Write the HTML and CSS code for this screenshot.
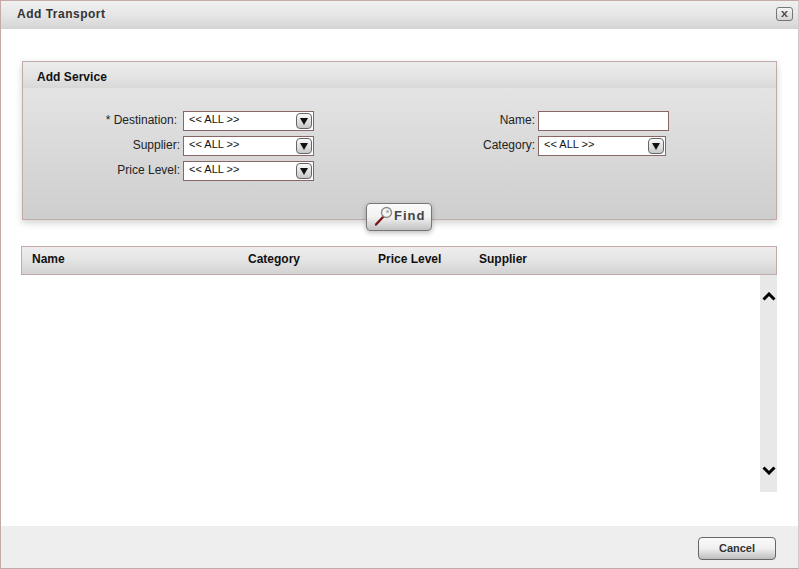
FILE: index.html
```html
<!DOCTYPE html>
<html lang="en">
<head>
<meta charset="utf-8">
<title>Add Transport</title>
<link rel="stylesheet" href="styles.css">
</head>
<body>
<div class="dialog">
  <header class="titlebar">
    <h1 class="title">Add Transport</h1>
    <button class="close" type="button" aria-label="Close">
      <svg width="9" height="8" viewBox="0 0 9 8"><path d="M1 1h2l1.500 2L6 1h2L5.600 4 8 7H6L4.500 5 3 7H1l2.400-3z" fill="#555"/></svg>
    </button>
  </header>
  <main class="content">
    <section class="panel">
      <h2 class="panel-head">Add Service</h2>
      <div class="form">
        <div class="form-col">
          <div class="row"><label class="label label-dest">* Destination:</label><div class="select"><span>&lt;&lt; ALL &gt;&gt;</span><i class="arrow"><svg width="8" height="7" viewBox="0 0 8 7"><path d="M0 0h8L4 7z" fill="#111"/></svg></i></div></div>
          <div class="row"><label class="label">Supplier:</label><div class="select"><span>&lt;&lt; ALL &gt;&gt;</span><i class="arrow"><svg width="8" height="7" viewBox="0 0 8 7"><path d="M0 0h8L4 7z" fill="#111"/></svg></i></div></div>
          <div class="row"><label class="label">Price Level:</label><div class="select"><span>&lt;&lt; ALL &gt;&gt;</span><i class="arrow"><svg width="8" height="7" viewBox="0 0 8 7"><path d="M0 0h8L4 7z" fill="#111"/></svg></i></div></div>
        </div>
        <div class="form-col form-col-right">
          <div class="row"><label class="label">Name:</label><div class="input"></div></div>
          <div class="row"><label class="label">Category:</label><div class="select select-short"><span>&lt;&lt; ALL &gt;&gt;</span><i class="arrow"><svg width="8" height="7" viewBox="0 0 8 7"><path d="M0 0h8L4 7z" fill="#111"/></svg></i></div></div>
        </div>
      </div>
      <button class="find" type="button">
        <svg class="find-icon" width="19" height="20" viewBox="0 0 19 20">
          <path d="M8.500 10.500 1 18.500" stroke="#7c1414" stroke-width="2.400" stroke-linecap="round"/>
          <circle cx="11.500" cy="6.500" r="5" fill="#f4f4f4" stroke="#8d8d8d" stroke-width="1.400"/>
          <circle cx="12.500" cy="5.500" r="1.600" fill="#b5b5b5"/>
        </svg>
        <span class="find-text">Find</span>
      </button>
    </section>
    <div class="thead">
      <span class="th th-name">Name</span>
      <span class="th th-cat">Category</span>
      <span class="th th-price">Price Level</span>
      <span class="th">Supplier</span>
    </div>
    <div class="tbody">
      <div class="scrollbar">
        <svg width="14" height="9" viewBox="0 0 14 9"><path d="M1.500 7.500 7 2l5.500 5.500" fill="none" stroke="#000" stroke-width="3"/></svg>
        <svg width="14" height="9" viewBox="0 0 14 9"><path d="M1.500 1.500 7 7l5.500-5.500" fill="none" stroke="#000" stroke-width="3"/></svg>
      </div>
    </div>
  </main>
  <footer class="footer">
    <button class="cancel" type="button">Cancel</button>
  </footer>
</div>
</body>
</html>
```
FILE: styles.css
```css
* { box-sizing: border-box; }
html, body { margin: 0; padding: 0; background: #fff; }
body { width: 799px; height: 569px; overflow: hidden; font-family: "Liberation Sans", Arial, sans-serif; font-size: 12px; color: #111; }
.dialog { width: 799px; height: 569px; display: flex; flex-direction: column; border: 1px solid #c4a9a9; border-right-color: #d8c8c8; background: #fff; }
.titlebar { height: 28px; flex: none; display: flex; align-items: center; justify-content: space-between; padding: 0 5px 2px 16px; background: linear-gradient(#f0f0f0, #e6e6e6 50%, #d4d4d4); }
.title { margin: 0; font-size: 12px; font-weight: bold; letter-spacing: 0.5px; color: #333; }
.close { width: 17px; height: 14px; padding: 0; display: flex; align-items: center; justify-content: center; border: 1px solid #777; border-radius: 3px; background: linear-gradient(#f4f4f4, #d4d4d4); }
.content { flex: 1; min-height: 0; padding: 32px 21px 0 20px; }
.panel { position: relative; height: 159px; margin-left: 1px; border: 1px solid #c4a9a9; background: linear-gradient(#e8e8e8, #cecece); box-shadow: 0 3px 7px rgba(0, 0, 0, 0.18); }
.panel-head { height: 26px; margin: 0; padding: 0 0 0 14px; font-size: 12px; line-height: 30px; font-weight: bold; letter-spacing: 0.05px; color: #111; background: linear-gradient(#ececec, #e4e4e4 55%, #d8d8d8); }
.form { display: flex; padding-top: 23px; }
.form-col { display: flex; flex-direction: column; gap: 5px; width: 291px; }
.form-col-right { margin-left: 64px; width: 291px; }
.row { display: flex; align-items: center; height: 20px; }
.label { width: 157px; flex: none; text-align: right; margin-right: 3px; color: #222; position: relative; top: -1px; }
.label-dest { padding-right: 3px; }
.select, .input { width: 131px; height: 20px; flex: none; border: 1px solid #876666; background: #fff; }
.select { display: flex; align-items: center; justify-content: space-between; padding: 0 0 0 5px; font-size: 11px; color: #111; }
.select span { position: relative; top: -2px; }
.select-short { width: 128px; }
.arrow { width: 16px; height: 16px; margin-right: 1px; display: flex; align-items: center; justify-content: center; border: 1px solid #666; border-radius: 4px; background: linear-gradient(#fafafa, #c8c8c8); }
.find { position: absolute; left: 343px; bottom: -12px; width: 66px; height: 28px; padding: 0 0 0 8px; display: flex; align-items: center; gap: 1px; border: 1px solid #777; border-radius: 4px; background: linear-gradient(#fafafa, #f2f2f2 50%, #c2c2c2); box-shadow: 0 2px 5px rgba(0, 0, 0, 0.25); font: bold 13px "Liberation Sans", Arial, sans-serif; letter-spacing: 1px; color: #444; }
.find-icon { margin-top: -3px; }
.find-text { position: relative; top: -2px; left: -1px; }
.thead { height: 29px; margin-top: 26px; display: flex; align-items: center; padding: 0 0 4px 10px; border: 1px solid #c4a9a9; background: linear-gradient(#eeeeee, #e4e4e4 50%, #d2d2d2); }
.th { font-weight: bold; color: #111; }
.th-name { width: 216px; }
.th-cat { width: 130px; }
.th-price { width: 101px; }
.tbody { display: flex; justify-content: flex-end; height: 217px; }
.scrollbar { width: 17px; height: 217px; display: flex; flex-direction: column; align-items: center; justify-content: space-between; padding: 17px 0; background: #e8e8e8; }
.footer { height: 42px; flex: none; margin-top: auto; display: flex; justify-content: flex-end; align-items: flex-start; padding: 11px 22px 0 0; background: #eeeeee; }
.cancel { width: 78px; height: 23px; padding: 0 0 1px; border: 1px solid #666; border-radius: 4px; background: linear-gradient(#fafafa, #f0f0f0 50%, #bdbdbd); font: bold 11px "Liberation Sans", Arial, sans-serif; color: #333; }
```
